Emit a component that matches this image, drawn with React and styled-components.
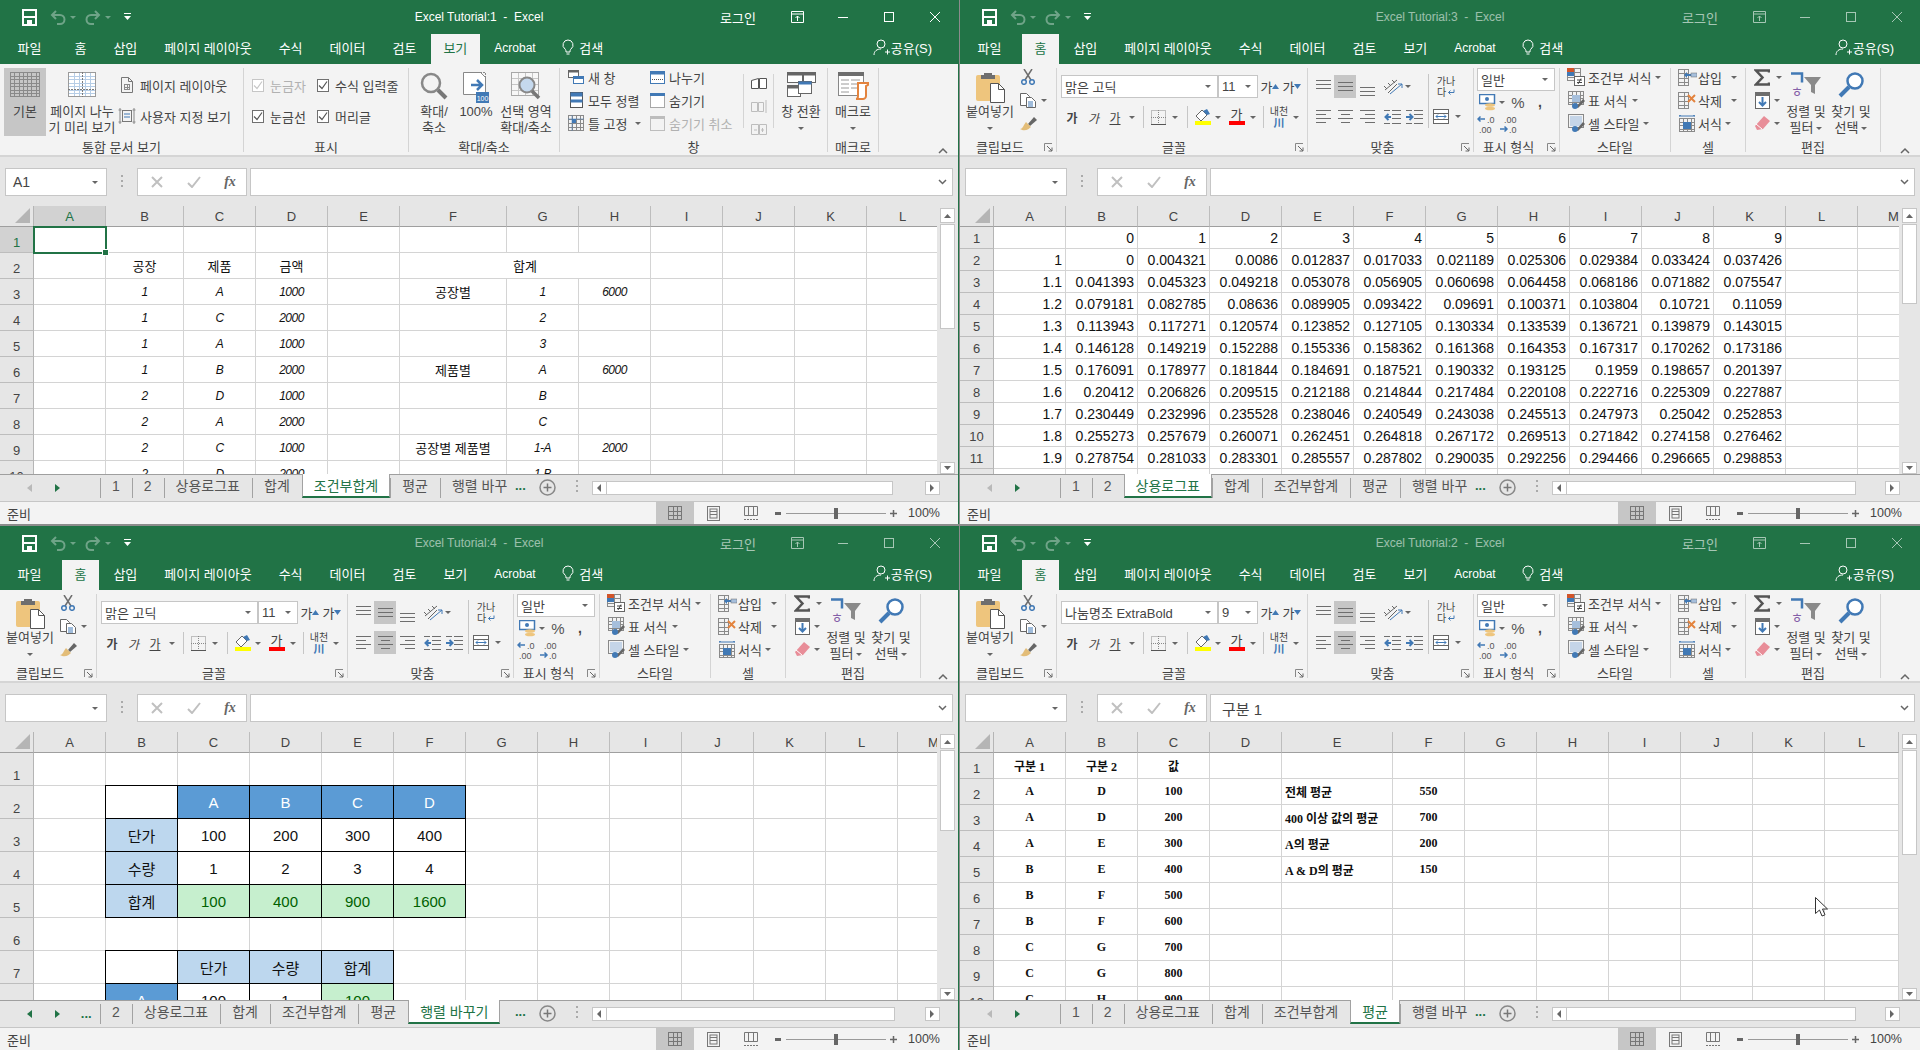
import React, { Fragment } from "react";
import styled, { createGlobalStyle, css } from "styled-components";

const GREEN = "#217346";
const RIBBON = "#f3f3f3";
const CHROME = "#e6e6e6";
const LINE = "#c6c6c6";
const TEXT = "#444444";
const BLUE = "#4179b5";
const GRAY = "#6e6e6e";
const SANS = '"Liberation Sans", "Noto Sans CJK KR", sans-serif';
const SERIF = '"Liberation Serif", "Noto Sans CJK KR", serif';

const GlobalStyles = createGlobalStyle`
  html, body { margin: 0; padding: 0; background: #8c8c8c; overflow: hidden; }
  body { font-family: ${SANS}; font-size: 13px; color: ${TEXT}; }
  svg { display: block; flex: none; }
  * { box-sizing: border-box; }
`;

const Desktop = styled.div`
  display: grid;
  grid-template-columns: 959px 960px;
  grid-template-rows: 524px 524px;
  column-gap: 1px;
  row-gap: 2px;
  width: 1920px;
  height: 1050px;
`;

const Window = styled.section`
  display: flex;
  flex-direction: column;
  overflow: hidden;
  background: ${CHROME};
  border-right: ${p => (p.$left ? `1px solid ${GREEN}` : "0")};
`;

/* title bar */
const TitleRow = styled.header`
  display: grid;
  grid-template-columns: 1fr auto 1fr;
  align-items: center;
  height: 34px;
  background: ${GREEN};
  color: #fff;
`;

const Qat = styled.div`
  display: flex;
  align-items: center;
  padding-left: 22px;
`;

const QatItem = styled.span`
  display: block;
  margin-left: ${p => p.$ml || 0}px;
`;

const QatCaret = styled.i`
  display: block;
  margin-left: ${p => p.$ml || 0}px;
  border: 3px solid transparent;
  border-top: 3px solid ${p => p.$color};
  border-bottom: 0;
`;

const WindowTitle = styled.div`
  font-size: 12px;
  white-space: pre;
  opacity: ${p => (p.$dim ? 0.55 : 1)};
`;

const TitleRight = styled.div`
  display: flex;
  justify-content: flex-end;
  align-items: center;
  opacity: ${p => (p.$dim ? 0.6 : 1)};
`;

const SignIn = styled.span`
  font-size: 13px;
  margin-right: 18px;
`;

const WinBtn = styled.span`
  display: flex;
  align-items: center;
  justify-content: center;
  width: 46px;
  height: 32px;
`;

const TabRow = styled.nav`
  display: flex;
  align-items: stretch;
  height: 30px;
  padding-left: 5px;
  gap: 2px;
  background: ${GREEN};
`;

const RibbonTab = styled.span`
  display: flex;
  align-items: center;
  padding: 0 12.5px 3px;
  color: ${p => (p.$on ? GREEN : "#fff")};
  background: ${p => (p.$on ? RIBBON : "transparent")};
  margin-right: ${p => p.$mr || 0}px;
  font-size: ${p => p.$size || 13}px;
  white-space: nowrap;
`;

const SearchTab = styled.span`
  display: flex;
  align-items: center;
  gap: 5px;
  margin-left: 12px;
  padding-bottom: 3px;
  color: #fff;
`;

const ShareTab = styled.span`
  display: flex;
  align-items: center;
  margin-left: auto;
  padding: 0 26px 3px 0;
  color: #fff;
`;

/* ribbon */
const Ribbon = styled.div`
  display: flex;
  height: 93px;
  padding-top: 4px;
  background: ${RIBBON};
  border-bottom: 2px solid #d5d5d5;
`;

const Group = styled.div`
  display: flex;
  flex-direction: column;
  width: ${p => p.$w}px;
  height: 84px;
  border-right: 1px solid #d4d4d4;
  flex: none;
`;

const Body = styled.div`
  display: flex;
  height: 71px;
  padding-left: ${p => p.$pl || 0}px;
`;

const Foot = styled.div`
  display: flex;
  height: 13px;
  line-height: 18px;
`;

const FootText = styled.span`
  flex: 1;
  text-align: center;
`;

const Launcher = styled.span`
  display: flex;
  justify-content: center;
  align-items: center;
  width: 16px;
  height: 16px;
`;

const Collapse = styled.span`
  align-self: flex-end;
  margin-left: auto;
  margin-right: ${p => p.$mr}px;
  margin-bottom: 1px;
`;

const LargeBtn = styled.div`
  display: flex;
  flex-direction: column;
  align-items: center;
  width: ${p => p.$w}px;
  height: 68px;
  padding-top: 4px;
  background: ${p => (p.$on ? LINE : "transparent")};
  flex: none;
`;

const IconSlot = styled.div`
  display: flex;
  align-items: flex-start;
  justify-content: center;
  height: 32px;
`;

const LargeLabel = styled.div`
  line-height: 16px;
  text-align: center;
  white-space: pre-line;
`;

const Caret = styled.i`
  display: inline-block;
  vertical-align: middle;
  margin-left: ${p => p.$ml || 0}px;
  border: 3px solid transparent;
  border-top: 3.5px solid #666;
  border-bottom: 0;
`;

const CaretLine = styled.div`
  display: flex;
  justify-content: center;
  align-items: center;
  height: 16px;
`;

const TwoRows = styled.div`
  display: grid;
  grid-template-columns: ${p => p.$cols || "auto"};
  grid-auto-rows: 18px;
  row-gap: 13px;
  padding-top: 8px;
  margin-left: ${p => p.$ml || 0}px;
`;

const ThreeRows = styled.div`
  display: grid;
  grid-auto-rows: 18px;
  row-gap: 5px;
  width: ${p => (p.$w ? `${p.$w}px` : "auto")};
  flex: none;
  margin-left: ${p => p.$ml || 0}px;
  border-left: ${p => (p.$rule ? "1px solid #d4d4d4" : "0")};
  border-right: ${p => (p.$rule ? "1px solid #d4d4d4" : "0")};
  height: ${p => (p.$rule ? "54px" : "auto")};
  margin-top: ${p => (p.$rule ? "6px" : "0")};
`;

const Small = styled.div`
  display: flex;
  align-items: center;
  height: 18px;
  white-space: nowrap;
  color: ${p => (p.$off ? "#b1b1b1" : TEXT)};
`;

const SmallIcon = styled.span`
  display: flex;
  justify-content: center;
  align-items: center;
  width: ${p => p.$w || 18}px;
  margin-right: ${p => p.$mr || 0}px;
  flex: none;
`;

const CaretBox = styled.span`
  display: flex;
  justify-content: center;
  align-items: center;
  width: ${p => p.$w || 12}px;
  height: 22px;
  flex: none;
`;

const CheckRow = styled.label`
  display: flex;
  align-items: center;
  gap: 6px;
  height: 18px;
  white-space: nowrap;
  color: ${p => (p.$off ? "#b1b1b1" : TEXT)};
`;

const CheckBox = styled.span`
  display: flex;
  align-items: center;
  justify-content: center;
  width: 12px;
  height: 13px;
  background: #fff;
  border: 1px solid ${p => (p.$off ? "#c6c6c6" : "#707070")};
`;

const FlexCol = styled.div`
  display: flex;
  flex-direction: column;
  gap: ${p => p.$gap || 0}px;
  padding-top: ${p => p.$pt || 0}px;
`;

const ToolRow = styled.div`
  display: flex;
  align-items: center;
  height: ${p => p.$h || 22}px;
`;

const Tool = styled.span`
  display: flex;
  align-items: center;
  justify-content: center;
  width: ${p => p.$w}px;
  height: 23px;
  margin-left: ${p => p.$ml || 0}px;
  background: ${p => (p.$on ? LINE : "transparent")};
  font-size: ${p => p.$size || 12}px;
  font-weight: ${p => (p.$bold ? 700 : 400)};
  font-style: ${p => (p.$italic ? "italic" : "normal")};
  text-decoration: ${p => (p.$under ? "underline" : "none")};
  flex: none;
`;

const Rule = styled.span`
  display: block;
  width: 1px;
  height: 22px;
  background: ${LINE};
  margin: 0 ${p => p.$mr || 0}px 0 ${p => p.$ml || 0}px;
  flex: none;
`;

const TallRule = styled(Rule)`
  height: 54px;
  margin-top: 6px;
`;

const ComboBox = styled.div`
  display: flex;
  align-items: center;
  justify-content: space-between;
  width: ${p => p.$w}px;
  height: ${p => p.$h || 23}px;
  margin-left: ${p => p.$ml || 0}px;
  padding: 0 6px 0 3px;
  background: #fff;
  border: 1px solid ${LINE};
  font-size: 13px;
  white-space: nowrap;
  overflow: hidden;
  flex: none;
`;

const ColorBar = styled.span`
  display: block;
  width: 16px;
  height: 4px;
  background: ${p => p.$color};
`;

const StackTool = styled.span`
  display: flex;
  flex-direction: column;
  align-items: center;
  width: ${p => p.$w}px;
  flex: none;
  margin-left: ${p => p.$ml || 0}px;
  line-height: ${p => p.$lh || 12}px;
  font-size: ${p => p.$size || 12}px;
`;

const WrapLine = styled.span`
  display: flex;
  align-items: center;
  gap: 1px;
`;

const TinyGlyph = styled.span`
  font-size: 11px;
  line-height: 10px;
  font-weight: 700;
  color: ${BLUE};
  text-align: center;
`;

const Percent = styled.span`
  font-size: 15px;
  color: #555;
`;

/* formula bar */
const FormulaRow = styled.div`
  display: flex;
  align-items: flex-start;
  height: 39px;
  padding: 11px 5px 0;
  background: ${CHROME};
`;

const NameBox = styled.div`
  display: flex;
  align-items: center;
  justify-content: space-between;
  width: 102px;
  height: 28px;
  padding: 0 8px 0 7px;
  background: #fff;
  border: 1px solid ${LINE};
  font-size: 14px;
`;

const Grip = styled.span`
  width: 2px;
  height: 14px;
  margin: 7px 14px 0 14px;
  background: repeating-linear-gradient(#aaa 0 2px, transparent 2px 5px);
`;

const FxBox = styled.div`
  display: grid;
  grid-template-columns: 38px 36px 36px;
  justify-items: center;
  align-items: center;
  width: 110px;
  height: 28px;
  background: #fff;
  border: 1px solid ${LINE};
`;

const FxText = styled.span`
  font-family: ${SERIF};
  font-style: italic;
  font-size: 14px;
  font-weight: 700;
  color: #666;
`;

const FormulaInput = styled.div`
  display: flex;
  align-items: center;
  justify-content: space-between;
  flex: 1;
  height: 28px;
  margin-left: 3px;
  padding: 0 5px 0 11px;
  background: #fff;
  border: 1px solid ${LINE};
  font-size: 15px;
`;

/* sheet */
const SheetArea = styled.div`
  position: relative;
  display: flex;
  gap: 3px;
  height: 278px;
  padding: 10px 3px 0 0;
  background: ${CHROME};
`;

const GridFrame = styled.div`
  flex: 1;
  min-width: 0;
  overflow: hidden;
`;

const sheetFonts = {
  plain: css`font-size: 13px;`,
  figures: css`font-size: 14px;`,
  large: css`font-size: 15px;`,
  serif: css`font-family: ${SERIF}; font-size: 12px; font-weight: 700; color: #111;`,
};

const SheetGrid = styled.div`
  display: grid;
  grid-template-columns: 34px ${p => p.$cols.map(c => `${c}px`).join(" ")};
  grid-template-rows: 21px;
  grid-auto-rows: ${p => p.$rowH}px;
  width: max-content;
  background: #fff;
  color: #111;
  ${p => sheetFonts[p.$font]}
`;

const Corner = styled.div`
  display: flex;
  align-items: flex-end;
  justify-content: flex-end;
  padding: 0 3px 3px 0;
  background: ${CHROME};
  border-right: 1px solid #b5b5b5;
  border-bottom: 1px solid #9f9f9f;
`;

const HeadCell = css`
  display: flex;
  justify-content: center;
  font-family: ${SANS};
  font-size: 13px;
  font-weight: 400;
  color: ${p => (p.$on ? GREEN : TEXT)};
  background: ${p => (p.$on ? "#d2d2d2" : CHROME)};
`;

const ColHead = styled.div`
  ${HeadCell}
  align-items: center;
  border-right: 1px solid #bdbdbd;
  border-bottom: 1px solid #9f9f9f;
`;

const RowHead = styled.div`
  ${HeadCell}
  align-items: flex-end;
  padding-bottom: 1px;
  line-height: 16px;
  border-right: 1px solid #b5b5b5;
  border-bottom: 1px solid #bdbdbd;
`;

const cellTones = {
  head: css`background: #5b9bd5; color: #fff;`,
  side: css`background: #bdd7ee;`,
  good: css`background: #c6efce; color: #006100;`,
  blank: css`background: #fff;`,
};

const Cell = styled.div`
  display: flex;
  align-items: center;
  justify-content: ${p => ({ left: "flex-start", right: "flex-end", center: "center" }[p.$align])};
  padding: 0 3px;
  white-space: nowrap;
  overflow: hidden;
  border-right: 1px solid #d4d4d4;
  border-bottom: 1px solid #d4d4d4;
  grid-column: ${p => (p.$span ? `span ${p.$span}` : "auto")};
  ${p => p.$italic && css`font-style: italic; font-size: 12px; letter-spacing: -0.5px;`}
  ${p => p.$tone && cellTones[p.$tone]}
  ${p => p.$box && css`
    position: relative;
    z-index: 1;
    margin: -1px 0 0 -1px;
    border: 1px solid #000;
  `}
`;

const ActiveCell = styled(Cell)`
  position: relative;
  overflow: visible;
  z-index: 2;
  outline: 2px solid ${GREEN};
  outline-offset: -1px;
  &::after {
    content: "";
    position: absolute;
    right: -4px;
    bottom: -4px;
    width: 5px;
    height: 5px;
    background: ${GREEN};
    border: 1px solid #fff;
  }
`;

const VScroll = styled.div`
  display: flex;
  flex-direction: column;
  width: 15px;
  flex: none;
  padding-top: 2px;
`;

const ScrollBtn = styled.div`
  display: flex;
  align-items: center;
  justify-content: center;
  width: 15px;
  height: ${p => p.$h || 15}px;
  background: #fff;
  border: 1px solid ${LINE};
  flex: none;
`;

const VThumb = styled.div`
  height: ${p => p.$h}px;
  margin-top: 1px;
  background: #fff;
  border: 1px solid ${LINE};
  flex: none;
`;

const Spacer = styled.div`
  flex: 1;
`;

const Pointer = styled.span`
  position: absolute;
  left: 855px;
  top: 175px;
`;

/* sheet tabs */
const TabBar = styled.div`
  display: flex;
  align-items: flex-start;
  height: 28px;
  background: ${CHROME};
  border-top: 1px solid #9f9f9f;
  border-bottom: 1px solid ${LINE};
`;

const TabStrip = styled.div`
  display: flex;
  align-items: flex-start;
  width: 515px;
  flex: none;
`;

const TabNav = styled.div`
  display: grid;
  grid-template-columns: repeat(3, 28.5px);
  justify-items: center;
  align-items: center;
  width: 100px;
  height: 20px;
  margin-top: 3px;
  padding-left: 15px;
  flex: none;
`;

const NavArrow = styled.i`
  display: block;
  border-top: 4px solid transparent;
  border-bottom: 4px solid transparent;
  ${p => (p.$dir === "left" ? "border-right" : "border-left")}: 5px solid ${p => (p.$on ? GREEN : "#b9b9b9")};
`;

const More = styled.span`
  font-weight: 700;
  font-size: 13px;
  line-height: 14px;
  color: ${GREEN};
`;

const SheetTab = styled.div`
  height: 20px;
  margin-top: 3px;
  padding: 0 12px 0 11px;
  line-height: 17px;
  font-size: 14px;
  color: #555;
  white-space: nowrap;
  border-left: 1px solid #a2a2a2;
  flex: none;
  ${p => p.$clip && css`width: 68px; padding-right: 0;`}
  ${p => p.$on && css`
    height: 24px;
    margin-top: -1px;
    padding: 0 11px;
    line-height: 25px;
    color: ${GREEN};
    background: #fff;
    border-left: 1px solid #a2a2a2;
    border-right: 1px solid #a2a2a2;
    border-bottom: 2px solid ${GREEN};
  `}
`;

const TabTail = styled.span`
  display: block;
  margin: ${p => p.$t || 0}px 0 0 ${p => p.$ml || 0}px;
  flex: none;
`;

const TabDots = styled.span`
  width: 2px;
  height: 14px;
  margin: 5px 0 0 20px;
  background: repeating-linear-gradient(#aaa 0 2px, transparent 2px 5px);
  flex: none;
`;

const HScroll = styled.div`
  display: flex;
  align-items: stretch;
  width: 348px;
  height: 14px;
  margin: 6px 0 0 14px;
  flex: none;
`;

const HBtn = styled(ScrollBtn)`
  height: 14px;
`;

const HThumb = styled.div`
  width: ${p => p.$w}px;
  background: #fff;
  border: 1px solid ${LINE};
  border-left: 0;
`;

/* status bar */
const StatusBar = styled.footer`
  display: flex;
  align-items: center;
  height: 22px;
  padding: 0 18px 0 7px;
  background: ${RIBBON};
  font-size: 13px;
`;

const ViewBtn = styled.span`
  display: flex;
  align-items: center;
  justify-content: center;
  width: 38px;
  height: 22px;
  background: ${p => (p.$on ? LINE : "transparent")};
  margin-left: ${p => (p.$first ? "auto" : "0")};
`;

const ZoomEnd = styled.span`
  display: flex;
  justify-content: center;
  width: ${p => p.$w}px;
`;

const Slider = styled.div`
  display: flex;
  align-items: center;
  justify-content: center;
  width: 100px;
  height: 11px;
  background: linear-gradient(#9a9a9a, #9a9a9a) center / 100% 1px no-repeat;
`;

const SliderKnob = styled.span`
  display: block;
  width: 4px;
  height: 11px;
  background: #666;
`;

const ZoomText = styled.span`
  width: 40px;
  text-align: right;
  font-size: 12.5px;
`;

/* drawings */
const Svg = ({ w, h, children }) => (
  <svg width={w} height={h} viewBox={`0 0 ${w} ${h}`} fill="none">
    {children}
  </svg>
);

const Mesh = ({ x, y, w, h, cols, rows, color = "#8a8a8a" }) => (
  <g stroke={color} strokeWidth="1">
    <rect x={x + 0.5} y={y + 0.5} width={w - 1} height={h - 1} />
    {Array.from({ length: cols - 1 }, (_, i) => {
      const px = Math.round(x + ((i + 1) * w) / cols) + 0.5;
      return <line key={`c${i}`} x1={px} x2={px} y1={y} y2={y + h} />;
    })}
    {Array.from({ length: rows - 1 }, (_, i) => {
      const py = Math.round(y + ((i + 1) * h) / rows) + 0.5;
      return <line key={`r${i}`} x1={x} x2={x + w} y1={py} y2={py} />;
    })}
  </g>
);

const Bars = ({ w = 15, ys, color = GRAY, spans }) => (
  <Svg w={w} h={23}>
    {ys.map((y, i) => (
      <line key={i} x1={spans ? spans[i][0] : 0} x2={spans ? spans[i][1] : w} y1={y + 0.5} y2={y + 0.5} stroke={color} />
    ))}
  </Svg>
);

const icons = {
  save: (
    <Svg w={15} h={17}>
      <path d="M1 1h13v15H1z" stroke="#fff" strokeWidth="2" />
      <rect x="1" y="7" width="13" height="2" fill="#fff" />
      <rect x="5" y="11" width="5" height="5" fill="#fff" />
    </Svg>
  ),
  undo: (
    <Svg w={16} h={15}>
      <path d="M6 1 2 5l4 4M2 5h8a4.5 4.5 0 0 1 0 9H7" stroke="#6fa488" strokeWidth="2" />
    </Svg>
  ),
  redo: (
    <Svg w={16} h={15}>
      <path d="M10 1l4 4-4 4M14 5H6a4.5 4.5 0 0 0 0 9h3" stroke="#6fa488" strokeWidth="2" />
    </Svg>
  ),
  custom: (
    <Svg w={7} h={8}>
      <path d="M0 .5h7" stroke="#fff" />
      <path d="M0 3h7L3.5 7z" fill="#fff" />
    </Svg>
  ),
  display: (
    <Svg w={13} h={12}>
      <path d="M.5.5h12v11H.5zM.5 3h12M6.5 10V5M4.5 7l2-2 2 2" stroke="#fff" />
    </Svg>
  ),
  min: <Svg w={10} h={10}><path d="M0 5.5h10" stroke="#fff" /></Svg>,
  max: <Svg w={10} h={10}><rect x=".5" y=".5" width="9" height="9" stroke="#fff" /></Svg>,
  close: <Svg w={10} h={10}><path d="M0 0l10 10M10 0 0 10" stroke="#fff" /></Svg>,
  bulb: (
    <Svg w={12} h={17}>
      <path d="M6 1a5 5 0 0 0-3 9c.8.8 1 1.500 1 3h4c0-1.500.2-2.200 1-3a5 5 0 0 0-3-9zM4.500 15h3" stroke="#fff" />
    </Svg>
  ),
  person: (
    <Svg w={18} h={17}>
      <circle cx="8" cy="5" r="4" stroke="#fff" />
      <path d="M1 16c0-4 3-6 7-6M12 13h5M14.500 10.500v5" stroke="#fff" />
    </Svg>
  ),
  chevUp: <Svg w={10} h={7}><path d="M1 6l4-4 4 4" stroke="#666" strokeWidth="1.500" /></Svg>,
  launch: (
    <Svg w={9} h={9}>
      <path d="M.5 8V.5H8" stroke="#888" />
      <path d="M3 3l5 5M8 4.500V8H4.500" stroke="#666" />
    </Svg>
  ),
  normal: <Svg w={30} h={25}><Mesh x={0} y={0} w={30} h={25} cols={7} rows={7} /></Svg>,
  pageBreak: (
    <Svg w={28} h={25}>
      <rect width="28" height="25" fill="#fff" />
      <Mesh x={0} y={0} w={28} h={25} cols={5} rows={7} color="#b6cde6" />
      <rect x=".5" y=".5" width="27" height="24" stroke="#9a9a9a" />
      <path d="M0 17.500h28M14.500 0v25" stroke="#7a7a7a" strokeDasharray="2 1" />
    </Svg>
  ),
  pageLayout: (
    <Svg w={12} h={16}>
      <path d="M.5.500h7l4 4v11H.5zM7.500.500v4h4" stroke="#777" />
      <Mesh x={3} y={7} w={6} h={6} cols={2} rows={2} />
    </Svg>
  ),
  customView: (
    <Svg w={18} h={18}>
      <path d="M.5 3h3M.5 15h3M14.500 3h3M14.500 15h3M2 1v16M16 1v16" stroke="#888" />
      <rect x="4.500" y="3.500" width="9" height="11" stroke="#777" />
      <path d="M6 7h6M6 10h6" stroke={BLUE} />
    </Svg>
  ),
  glass: (
    <Svg w={28} h={28}>
      <circle cx="11" cy="11" r="9" stroke="#888" strokeWidth="2.500" />
      <path d="M18 18l8 8" stroke="#777" strokeWidth="4" />
    </Svg>
  ),
  hundred: (
    <Svg w={26} h={31}>
      <path d="M.5.500h17l5 5v17H.5z" fill="#fff" stroke="#888" />
      <path d="M14 .5h8.500v8" stroke="#888" strokeDasharray="2 1" />
      <path d="M8 13h10M14 8l5 5-5 5" stroke={BLUE} strokeWidth="2.500" />
      <rect x="13" y="20" width="13" height="11" fill={BLUE} />
      <text x="19.500" y="28.500" fontSize="7" fill="#fff" textAnchor="middle" fontFamily={SANS}>100</text>
    </Svg>
  ),
  zoomSel: (
    <Svg w={30} h={28}>
      <Mesh x={0} y={0} w={28} h={24} cols={4} rows={4} color="#a8a8a8" />
      <rect x="1" y="1" width="26" height="22" fill="#fff" fillOpacity=".35" />
      <circle cx="16" cy="13" r="7.500" fill="#c5d9ee" stroke="#888" strokeWidth="2" />
      <path d="M21 19l7 7" stroke="#777" strokeWidth="3.500" />
    </Svg>
  ),
  newWin: (
    <Svg w={16} h={14}>
      <rect x=".5" y=".5" width="10" height="7" fill="#fff" stroke="#666" />
      <rect x=".5" y=".5" width="10" height="2" fill="#666" />
      <rect x="5.500" y="6.500" width="10" height="7" fill="#fff" stroke={BLUE} />
      <rect x="5.500" y="6.500" width="10" height="2.500" fill={BLUE} />
    </Svg>
  ),
  arrange: (
    <Svg w={13} h={16}>
      <rect x=".5" y=".5" width="12" height="15" fill="#fff" stroke="#555" />
      <rect x=".5" y=".5" width="12" height="4" fill={BLUE} />
      <rect x=".5" y="7.500" width="12" height="3" fill={BLUE} />
    </Svg>
  ),
  freeze: (
    <Svg w={16} h={16}>
      <Mesh x={0} y={0} w={16} h={16} cols={4} rows={4} color="#8a8a8a" />
      <rect x="4" y="4" width="4" height="4" fill={BLUE} />
      <path d="M0 4h16M4 0v16" stroke={BLUE} strokeOpacity=".5" />
    </Svg>
  ),
  split: (
    <Svg w={15} h={13}>
      <rect x=".5" y=".5" width="14" height="12" fill="#fff" stroke={BLUE} />
      <rect x=".5" y=".5" width="14" height="3" fill={BLUE} />
      <path d="M2 8.500h11" stroke="#555" strokeDasharray="1 1" />
    </Svg>
  ),
  hide: (
    <Svg w={15} h={15}>
      <rect x=".5" y=".5" width="14" height="14" fill="#fff" stroke="#555" strokeDasharray="1 1" />
      <rect x="0" y="0" width="15" height="3" fill={BLUE} />
    </Svg>
  ),
  unhide: (
    <Svg w={15} h={15}>
      <rect x=".5" y=".5" width="14" height="14" stroke="#bdbdbd" />
      <rect x="0" y="0" width="15" height="3" fill="#bdbdbd" />
    </Svg>
  ),
  sideBySide: (
    <Svg w={16} h={11}>
      <path d="M.5 2.500 7.500.5v10h-7zM8.500.5h7v10h-7z" fill="#fff" stroke="#555" />
    </Svg>
  ),
  syncScroll: (
    <Svg w={16} h={15}>
      <path d="M.5 3.500h6v9h-6zM7.500 3.500h5v9h-5zM15 1v13" stroke="#bdbdbd" />
    </Svg>
  ),
  resetPos: (
    <Svg w={16} h={11}>
      <path d="M.5.5h7v10h-7zM8.500.5h7v10h-7zM3 6h3M10 6h3M11.500 4v4" stroke="#bdbdbd" />
    </Svg>
  ),
  switchWin: (
    <Svg w={29} h={25}>
      <rect x=".5" y=".5" width="15" height="10" fill="#fff" stroke="#666" />
      <rect x=".5" y=".5" width="15" height="3" fill="#666" />
      <rect x="16.500" y=".5" width="12" height="10" fill="#fff" stroke="#666" />
      <rect x="16.500" y=".5" width="12" height="3" fill="#666" />
      <rect x=".5" y="13.500" width="13" height="11" fill="#fff" stroke="#666" />
      <rect x=".5" y="13.500" width="13" height="3" fill="#666" />
      <rect x="11.500" y="9.500" width="13" height="12" fill="#fff" stroke="#666" />
      <rect x="11.500" y="9.500" width="13" height="3" fill={BLUE} />
    </Svg>
  ),
  macro: (
    <Svg w={31} h={28}>
      <rect x=".5" y=".5" width="25" height="23" fill="#fff" stroke="#888" />
      <rect x="0" y="0" width="26" height="4" fill="#6e6e6e" />
      <path d="M3 8h8M13 8h9M3 12h8M13 12h9M3 16h8M13 16h6M3 20h8" stroke="#9a9a9a" />
      <path d="M20 11h10v2l-2 1v10c0 2-2 3-3 3h-7c1 0 2-1 2-3V13z" fill="#fff" stroke="#e3833e" strokeWidth="2" />
    </Svg>
  ),
  paste: (
    <Svg w={29} h={31}>
      <rect x="0" y="3" width="24" height="26" rx="2" fill="#eec57d" />
      <path d="M8 3V1h8v2h3v4H5V3z" fill="#6e6e6e" />
      <path d="M14.500 11.500h8l6 6v13h-14z" fill="#fff" stroke="#555" />
      <path d="M22.500 11.500v6h6" stroke="#555" />
    </Svg>
  ),
  cut: (
    <Svg w={14} h={16}>
      <path d="M3 0l7 11M11 0 4 11" stroke="#6e6e6e" strokeWidth="1.500" />
      <circle cx="3" cy="13" r="2.300" stroke={BLUE} strokeWidth="1.500" />
      <circle cx="11" cy="13" r="2.300" stroke={BLUE} strokeWidth="1.500" />
    </Svg>
  ),
  copy: (
    <Svg w={16} h={15}>
      <path d="M.5.500h6l3 3v9h-9z" fill="#fff" stroke="#666" />
      <path d="M6.500 4.500h5l4 4v6h-9z" fill="#fff" stroke="#666" />
      <path d="M8 9h5M8 11h5M8 13h5" stroke={BLUE} />
    </Svg>
  ),
  brush: (
    <Svg w={17} h={15}>
      <path d="M8 8l6-7 3 3-7 6z" fill="#666" />
      <path d="M0 13c3 0 4-5 6-7l5 5c-2 2-6 5-11 2z" fill="#e3bd78" />
    </Svg>
  ),
  borders: (
    <Svg w={15} h={15}>
      <rect x=".5" y=".5" width="14" height="14" stroke="#888" strokeDasharray="1 1" />
      <path d="M7.500 0v15M0 7.500h15" stroke="#888" strokeDasharray="1 1" />
      <path d="M0 14.500h15" stroke="#555" />
    </Svg>
  ),
  fill: (
    <Svg w={16} h={12}>
      <path d="M7 1 1 7l5 5 6-6z" fill="#fff" stroke="#666" />
      <path d="M8 2l4 4 3-1-3-5z" fill={BLUE} />
    </Svg>
  ),
  orient: (
    <Svg w={22} h={20}>
      <path d="M3 13 15 3M6 16 15 7M2 9l3 3M6 6l3 3M10 3l3 3" stroke="#666" />
      <path d="M8 17l12-10M20 7h-4M20 7v4" stroke={BLUE} />
    </Svg>
  ),
  outdent: (
    <Svg w={17} h={14}>
      <path d="M8 .5h9M8 4.500h9M8 8.500h9M8 13.500h9M0 13.500h6M0 .5h6" stroke={GRAY} />
      <path d="M7 7H2M4.500 4 1.500 7l3 3" stroke={BLUE} strokeWidth="2" />
    </Svg>
  ),
  indent: (
    <Svg w={17} h={14}>
      <path d="M8 .5h9M8 4.500h9M8 8.500h9M8 13.500h9M0 13.500h6M0 .5h6" stroke={GRAY} />
      <path d="M0 7h6M3.500 4l3 3-3 3" stroke={BLUE} strokeWidth="2" />
    </Svg>
  ),
  merge: (
    <Svg w={16} h={15}>
      <rect x=".5" y=".5" width="15" height="14" fill="#fff" stroke="#666" />
      <path d="M0 4.500h16M0 10.500h16" stroke="#666" />
      <path d="M3 7.500h10M5 5.500l-2 2 2 2M11 5.500l2 2-2 2" stroke={BLUE} />
    </Svg>
  ),
  wrapArrow: <Svg w={8} h={6}><path d="M7 .5v3H1.500M3.500 1.500l-2 2 2 2" stroke={BLUE} /></Svg>,
  money: (
    <Svg w={17} h={17}>
      <rect x=".5" y=".5" width="15" height="9" fill="#fff" stroke={BLUE} strokeWidth="1.500" />
      <circle cx="8" cy="5" r="2" fill={BLUE} />
      <ellipse cx="11" cy="11" rx="5" ry="1.800" fill="#eec57d" />
      <ellipse cx="11" cy="14.500" rx="5" ry="1.800" fill="#eec57d" />
    </Svg>
  ),
  cond: (
    <Svg w={18} h={18}>
      <Mesh x={0} y={0} w={14} h={13} cols={2} rows={3} />
      <rect x="0" y="0" width="7" height="4" fill="#d2552a" />
      <rect x="0" y="4" width="7" height="4" fill={BLUE} />
      <rect x="7.500" y="8.500" width="10" height="9" fill="#fff" stroke="#666" />
      <path d="M10 12h5M10 14.500h5M14 10.500l-3 5.500" stroke="#444" />
    </Svg>
  ),
  table: (
    <Svg w={17} h={18}>
      <Mesh x={0} y={0} w={16} h={14} cols={4} rows={4} />
      <rect x="4" y="4" width="8" height="7" fill="#a6bfdc" />
      <path d="M8 16l7-8 2 2-7 7z" fill="#666" />
      <circle cx="7" cy="15" r="3" fill={BLUE} />
    </Svg>
  ),
  cellStyle: (
    <Svg w={17} h={18}>
      <rect x=".5" y=".5" width="15" height="13" stroke="#888" />
      <rect x="2" y="2" width="12" height="10" fill="#c5d5e8" />
      <path d="M8 16l7-8 2 2-7 7z" fill="#666" />
      <circle cx="7" cy="15" r="3" fill={BLUE} />
    </Svg>
  ),
  insert: (
    <Svg w={19} h={17}>
      <Mesh x={0} y={0} w={11} h={17} cols={2} rows={4} />
      <path d="M9 6h5" stroke={BLUE} strokeWidth="2" />
      <path d="M6 6l3-3v6z" fill={BLUE} />
      <rect x="13" y="4" width="6" height="4" fill="#a6bfdc" stroke={GRAY} strokeWidth=".5" />
    </Svg>
  ),
  remove: (
    <Svg w={19} h={17}>
      <Mesh x={0} y={0} w={11} h={17} cols={2} rows={4} />
      <path d="M10 3l7 7M17 3l-7 7" stroke="#e3833e" strokeWidth="2" />
    </Svg>
  ),
  format: (
    <Svg w={16} h={17}>
      <path d="M0 1h16M0 1l2-1M16 1l-2-1" stroke={BLUE} />
      <Mesh x={0} y={3} w={16} h={14} cols={4} rows={4} />
      <rect x="4" y="7" width="8" height="7" fill={BLUE} />
    </Svg>
  ),
  sigma: (
    <Svg w={16} h={17}>
      <path d="M15 3.500V1.500H2L8.500 8.500 2 15.500h13v-2" stroke="#555" strokeWidth="2.500" />
    </Svg>
  ),
  fillDown: (
    <Svg w={15} h={17}>
      <rect x=".5" y=".5" width="14" height="16" fill="#fff" stroke="#666" />
      <rect x="0" y="0" width="15" height="4" fill="#6e6e6e" />
      <path d="M7.500 5v8M4 10l3.500 3.500L11 10" stroke={BLUE} strokeWidth="2" />
    </Svg>
  ),
  eraser: (
    <Svg w={15} h={14}>
      <path d="M9 0l6 5-7 8-6 1-2-4z" fill="#e88d98" />
      <path d="M1 8l6 5" stroke="#fff" />
    </Svg>
  ),
  sort: (
    <Svg w={30} h={25}>
      <path d="M0 1.500h11v9" stroke={BLUE} strokeWidth="2.500" />
      <text x="6" y="24" fontSize="13" fill="#8460a8" textAnchor="middle" fontFamily={SANS}>ㅎ</text>
      <path d="M13 5h17l-6 8v9l-4-2v-7z" fill="#8a8a8a" />
    </Svg>
  ),
  find: (
    <Svg w={28} h={26}>
      <circle cx="18" cy="9" r="7.500" fill="#fff" stroke={BLUE} strokeWidth="2.500" />
      <path d="M12 15 3 24" stroke={BLUE} strokeWidth="4" />
    </Svg>
  ),
  stNormal: <Svg w={14} h={14}><Mesh x={0} y={0} w={14} h={14} cols={3} rows={3} color="#777" /></Svg>,
  stLayout: (
    <Svg w={13} h={15}>
      <rect x=".5" y=".5" width="12" height="14" stroke="#777" />
      <rect x="3" y="3" width="7" height="9" stroke="#777" />
      <path d="M3 5.500h7M3 8.500h7" stroke="#777" />
    </Svg>
  ),
  stBreak: (
    <Svg w={14} h={15}>
      <path d="M.5.500h13v9H.5zM4.500.500v9M9.500.500v9" stroke="#777" />
      <path d="M0 13.500h14" stroke="#777" strokeDasharray="2 1" />
    </Svg>
  ),
  minus: <Svg w={6} h={3}><rect width="6" height="3" fill="#666" /></Svg>,
  plus: <Svg w={7} h={7}><path d="M0 3.500h7M3.500 0v7" stroke="#666" strokeWidth="1.500" /></Svg>,
  addSheet: (
    <Svg w={17} h={17}>
      <circle cx="8.500" cy="8.500" r="7.500" stroke="#888" strokeWidth="1.500" />
      <path d="M4.500 8.500h8M8.500 4.500v8" stroke="#777" strokeWidth="1.500" />
    </Svg>
  ),
  cross: <Svg w={12} h={12}><path d="M1 1l10 10M11 1 1 11" stroke="#c0c0c0" strokeWidth="2" /></Svg>,
  tick: <Svg w={14} h={12}><path d="M1 7l4 4 8-10" stroke="#c0c0c0" strokeWidth="2" /></Svg>,
  chevDown: <Svg w={9} h={6}><path d="M1 1l3.500 3.500L8 1" stroke="#666" strokeWidth="1.500" /></Svg>,
  corner: <Svg w={15} h={15}><path d="M15 0v15H0z" fill="#b5b5b5" /></Svg>,
  arrowUp: <Svg w={7} h={4}><path d="M3.500 0 7 4H0z" fill="#666" /></Svg>,
  arrowDown: <Svg w={7} h={4}><path d="M0 0h7L3.500 4z" fill="#666" /></Svg>,
  arrowLeft: <Svg w={4} h={8}><path d="M4 0v8L0 4z" fill="#666" /></Svg>,
  arrowRight: <Svg w={4} h={8}><path d="M0 0v8l4-4z" fill="#666" /></Svg>,
  pointer: (
    <Svg w={13} h={20}>
      <path d="M.5.500v16l4-3.500 2.500 6 3-1.200-2.500-5.800h5z" fill="#fff" stroke="#333" />
    </Svg>
  ),
  tickMark: <Svg w={10} h={9}><path d="M1 4.500l3 3 5-7" stroke="#555" strokeWidth="1.200" /></Svg>,
  tickMarkOff: <Svg w={10} h={9}><path d="M1 4.500l3 3 5-7" stroke="#c6c6c6" strokeWidth="1.200" /></Svg>,
  growMark: <Svg w={7} h={5}><path d="M3.500 0 7 5H0z" fill={BLUE} /></Svg>,
  shrinkMark: <Svg w={7} h={5}><path d="M0 0h7L3.500 5z" fill={BLUE} /></Svg>,
  decMore: (
    <Svg w={22} h={20}>
      <path d="M1 4h7M3.500 1.500 1 4l2.500 2.500" stroke={BLUE} strokeWidth="1.500" />
      <text x="10" y="8" fontSize="9" fill="#555" fontFamily={SANS}>.0</text>
      <text x="2" y="18" fontSize="9" fill="#555" fontFamily={SANS}>.00</text>
    </Svg>
  ),
  decLess: (
    <Svg w={22} h={20}>
      <text x="5" y="8" fontSize="9" fill="#555" fontFamily={SANS}>.00</text>
      <path d="M1 14h7M5.500 11.500 8 14l-2.500 2.500" stroke={BLUE} strokeWidth="1.500" />
      <text x="10" y="18" fontSize="9" fill="#555" fontFamily={SANS}>.0</text>
    </Svg>
  ),
};

const Check = ({ label, off }) => (
  <CheckRow $off={off}>
    <CheckBox $off={off}>{off ? icons.tickMarkOff : icons.tickMark}</CheckBox>
    {label}
  </CheckRow>
);

const GroupFoot = ({ label, launcher }) => (
  <Foot>
    <FootText>{label}</FootText>
    {launcher && <Launcher>{icons.launch}</Launcher>}
  </Foot>
);

const ViewRibbon = () => (
  <Ribbon>
    <Group $w={244}>
      <Body $pl={4}>
        <LargeBtn $w={42} $on>
          <IconSlot>{icons.normal}</IconSlot>
          <LargeLabel>기본</LargeLabel>
        </LargeBtn>
        <LargeBtn $w={72}>
          <IconSlot>{icons.pageBreak}</IconSlot>
          <LargeLabel>{"페이지 나누\n기 미리 보기"}</LargeLabel>
        </LargeBtn>
        <TwoRows>
          <Small>
            <SmallIcon $w={18} $mr={4}>{icons.pageLayout}</SmallIcon>
            페이지 레이아웃
          </Small>
          <Small>
            <SmallIcon $w={18} $mr={4}>{icons.customView}</SmallIcon>
            사용자 지정 보기
          </Small>
        </TwoRows>
      </Body>
      <GroupFoot label="통합 문서 보기" />
    </Group>
    <Group $w={165}>
      <Body $pl={8}>
        <TwoRows $cols="65px auto">
          <Check label="눈금자" off />
          <Check label="수식 입력줄" />
          <Check label="눈금선" />
          <Check label="머리글" />
        </TwoRows>
      </Body>
      <GroupFoot label="표시" />
    </Group>
    <Group $w={151}>
      <Body>
        <LargeBtn $w={50}>
          <IconSlot>{icons.glass}</IconSlot>
          <LargeLabel>{"확대/\n축소"}</LargeLabel>
        </LargeBtn>
        <LargeBtn $w={34}>
          <IconSlot>{icons.hundred}</IconSlot>
          <LargeLabel>100%</LargeLabel>
        </LargeBtn>
        <LargeBtn $w={66}>
          <IconSlot>{icons.zoomSel}</IconSlot>
          <LargeLabel>{"선택 영역\n확대/축소"}</LargeLabel>
        </LargeBtn>
      </Body>
      <GroupFoot label="확대/축소" />
    </Group>
    <Group $w={268}>
      <Body $pl={7}>
        <ThreeRows $w={81}>
          <Small><SmallIcon $mr={3}>{icons.newWin}</SmallIcon>새 창</Small>
          <Small><SmallIcon $mr={3}>{icons.arrange}</SmallIcon>모두 정렬</Small>
          <Small>
            <SmallIcon $mr={3}>{icons.freeze}</SmallIcon>
            틀 고정<Caret $ml={7} />
          </Small>
        </ThreeRows>
        <ThreeRows $w={95}>
          <Small><SmallIcon $mr={3}>{icons.split}</SmallIcon>나누기</Small>
          <Small><SmallIcon $mr={3}>{icons.hide}</SmallIcon>숨기기</Small>
          <Small $off><SmallIcon $mr={3}>{icons.unhide}</SmallIcon>숨기기 취소</Small>
        </ThreeRows>
        <ThreeRows $w={31} $rule>
          <SmallIcon $w={29}>{icons.sideBySide}</SmallIcon>
          <SmallIcon $w={29}>{icons.syncScroll}</SmallIcon>
          <SmallIcon $w={29}>{icons.resetPos}</SmallIcon>
        </ThreeRows>
        <LargeBtn $w={54}>
          <IconSlot>{icons.switchWin}</IconSlot>
          <LargeLabel>창 전환</LargeLabel>
          <CaretLine><Caret /></CaretLine>
        </LargeBtn>
      </Body>
      <GroupFoot label="창" />
    </Group>
    <Group $w={51}>
      <Body>
        <LargeBtn $w={50}>
          <IconSlot>{icons.macro}</IconSlot>
          <LargeLabel>매크로</LargeLabel>
          <CaretLine><Caret /></CaretLine>
        </LargeBtn>
      </Body>
      <GroupFoot label="매크로" />
    </Group>
    <Collapse $mr={10}>{icons.chevUp}</Collapse>
  </Ribbon>
);

const HomeRibbon = ({ font, size, center }) => (
  <Ribbon>
    <Group $w={97}>
      <Body $pl={4}>
        <LargeBtn $w={52}>
          <IconSlot>{icons.paste}</IconSlot>
          <LargeLabel>붙여넣기</LargeLabel>
          <CaretLine><Caret /></CaretLine>
        </LargeBtn>
        <ThreeRows>
          <Small><SmallIcon $w={24}>{icons.cut}</SmallIcon></Small>
          <Small>
            <SmallIcon $w={24}>{icons.copy}</SmallIcon>
            <Caret $ml={1} />
          </Small>
          <Small><SmallIcon $w={24}>{icons.brush}</SmallIcon></Small>
        </ThreeRows>
      </Body>
      <GroupFoot label="클립보드" launcher />
    </Group>
    <Group $w={251}>
      <Body $pl={4}>
        <FlexCol $pt={7} $gap={8}>
          <ToolRow $h={23}>
            <ComboBox $w={157}>{font}<Caret /></ComboBox>
            <ComboBox $w={40}>{size}<Caret /></ComboBox>
            <Tool $w={24} $size={13}>가<TabTail>{icons.growMark}</TabTail></Tool>
            <Tool $w={20} $size={13}>가<TabTail>{icons.shrinkMark}</TabTail></Tool>
          </ToolRow>
          <ToolRow>
            <Tool $w={22} $bold>가</Tool>
            <Tool $w={21} $italic>가</Tool>
            <Tool $w={22} $under>가</Tool>
            <CaretBox><Caret /></CaretBox>
            <Rule $ml={5} $mr={4} />
            <Tool $w={20}>{icons.borders}</Tool>
            <CaretBox $w={14}><Caret /></CaretBox>
            <Rule $ml={5} $mr={5} />
            <StackTool $w={19}>{icons.fill}<ColorBar $color="#ffff00" /></StackTool>
            <CaretBox><Caret /></CaretBox>
            <StackTool $w={21} $ml={2} $size={13}>가<ColorBar $color="#ff0000" /></StackTool>
            <CaretBox><Caret /></CaretBox>
            <Rule $ml={4} $mr={5} />
            <StackTool $w={20} $size={10}>내천<TinyGlyph>川</TinyGlyph></StackTool>
            <CaretBox $w={14}><Caret /></CaretBox>
          </ToolRow>
        </FlexCol>
      </Body>
      <GroupFoot label="글꼴" launcher />
    </Group>
    <Group $w={166}>
      <Body $pl={4}>
        <FlexCol $pt={7} $gap={7}>
          <ToolRow $h={23}>
            <Tool $w={22}><Bars ys={[5, 9, 13]} /></Tool>
            <Tool $w={22} $on><Bars ys={[7, 11, 15]} /></Tool>
            <Tool $w={22}><Bars ys={[12, 16, 20]} /></Tool>
            <Tool $w={22} $ml={4}>{icons.orient}</Tool>
            <CaretBox $w={8}><Caret /></CaretBox>
          </ToolRow>
          <ToolRow $h={23}>
            <Tool $w={22}><Bars ys={[5, 9, 13, 17]} spans={[[0, 15], [0, 10], [0, 15], [0, 10]]} /></Tool>
            <Tool $w={22} $on={center}><Bars ys={[5, 9, 13, 17]} spans={[[0, 15], [3, 12], [0, 15], [3, 12]]} /></Tool>
            <Tool $w={22}><Bars ys={[5, 9, 13, 17]} spans={[[0, 15], [5, 15], [0, 15], [5, 15]]} /></Tool>
            <Tool $w={22} $ml={3}>{icons.outdent}</Tool>
            <Tool $w={22}>{icons.indent}</Tool>
          </ToolRow>
        </FlexCol>
        <TallRule $ml={3} />
        <FlexCol $pt={7} $gap={7}>
          <ToolRow $h={23}>
            <StackTool $w={34} $size={10} $lh={11}>
              가나
              <WrapLine>다{icons.wrapArrow}</WrapLine>
            </StackTool>
          </ToolRow>
          <ToolRow $h={23}>
            <Tool $w={24}>{icons.merge}</Tool>
            <CaretBox $w={10}><Caret /></CaretBox>
          </ToolRow>
        </FlexCol>
      </Body>
      <GroupFoot label="맞춤" launcher />
    </Group>
    <Group $w={86}>
      <Body $pl={3}>
        <ThreeRows>
          <ComboBox $w={78} $h={23}>일반<Caret /></ComboBox>
          <ToolRow>
            <Tool $w={20}>{icons.money}</Tool>
            <CaretBox $w={10}><Caret /></CaretBox>
            <Tool $w={22}><Percent>%</Percent></Tool>
            <Tool $w={22} $bold $size={14}>,</Tool>
          </ToolRow>
          <ToolRow>
            <Tool $w={22}>{icons.decMore}</Tool>
            <Tool $w={22}>{icons.decLess}</Tool>
          </ToolRow>
        </ThreeRows>
      </Body>
      <GroupFoot label="표시 형식" launcher />
    </Group>
    <Group $w={111}>
      <Body $pl={7}>
        <ThreeRows>
          <Small><SmallIcon $mr={3}>{icons.cond}</SmallIcon>조건부 서식<Caret $ml={4} /></Small>
          <Small><SmallIcon $mr={3}>{icons.table}</SmallIcon>표 서식<Caret $ml={4} /></Small>
          <Small><SmallIcon $mr={3}>{icons.cellStyle}</SmallIcon>셀 스타일<Caret $ml={4} /></Small>
        </ThreeRows>
      </Body>
      <GroupFoot label="스타일" />
    </Group>
    <Group $w={75}>
      <Body $pl={6}>
        <ThreeRows>
          <Small><SmallIcon $w={20} $mr={1}>{icons.insert}</SmallIcon>삽입<Caret $ml={9} /></Small>
          <Small><SmallIcon $w={20} $mr={1}>{icons.remove}</SmallIcon>삭제<Caret $ml={9} /></Small>
          <Small><SmallIcon $w={20} $mr={1}>{icons.format}</SmallIcon>서식<Caret $ml={3} /></Small>
        </ThreeRows>
      </Body>
      <GroupFoot label="셀" />
    </Group>
    <Group $w={135}>
      <Body $pl={7}>
        <ThreeRows $w={30}>
          <Small><SmallIcon $w={18} $mr={5}>{icons.sigma}</SmallIcon><Caret /></Small>
          <Small><SmallIcon $w={18} $mr={3}>{icons.fillDown}</SmallIcon><Caret /></Small>
          <Small><SmallIcon $w={18} $mr={3}>{icons.eraser}</SmallIcon><Caret /></Small>
        </ThreeRows>
        <LargeBtn $w={46}>
          <IconSlot>{icons.sort}</IconSlot>
          <LargeLabel>{"정렬 및\n필터"}<Caret $ml={3} /></LargeLabel>
        </LargeBtn>
        <LargeBtn $w={44}>
          <IconSlot>{icons.find}</IconSlot>
          <LargeLabel>{"찾기 및\n선택"}<Caret $ml={3} /></LargeLabel>
        </LargeBtn>
      </Body>
      <GroupFoot label="편집" />
    </Group>
    <Collapse $mr={10}>{icons.chevUp}</Collapse>
  </Ribbon>
);

const Sheet = ({ data }) => (
  <GridFrame>
    <SheetGrid $cols={data.cols} $rowH={data.rowH} $font={data.font}>
      <Corner>{icons.corner}</Corner>
      {data.cols.map((_, i) => (
        <ColHead key={i} $on={data.active && i === 0}>{"ABCDEFGHIJKLM"[i]}</ColHead>
      ))}
      {data.rows.map((row, r) => {
        const cells = [];
        let filled = 0;
        row.forEach(c => {
          cells.push(c);
          filled += c && c.span ? c.span : 1;
        });
        while (filled < data.cols.length) {
          cells.push(null);
          filled++;
        }
        return (
          <Fragment key={r}>
            <RowHead $on={data.active && r === 0}>{r + 1}</RowHead>
            {cells.map((c, i) => {
              const cell = typeof c === "string" ? { t: c } : c || {};
              const Comp = cell.active ? ActiveCell : Cell;
              return (
                <Comp
                  key={i}
                  $align={cell.a || data.align}
                  $span={cell.span}
                  $italic={cell.italic}
                  $tone={cell.tone}
                  $box={cell.box}
                >
                  {cell.t}
                </Comp>
              );
            })}
          </Fragment>
        );
      })}
    </SheetGrid>
  </GridFrame>
);

const ExcelWindow = ({ n, left, dim, tab, ribbon, nameBox, formula, sheet, thumb, tabs, navLeft, navMore, hThumb, pointer }) => {
  const ribbonTabs = ["홈", "삽입", "페이지 레이아웃", "수식", "데이터", "검토", "보기"];
  return (
    <Window $left={left}>
      <TitleRow>
        <Qat>
          <QatItem>{icons.save}</QatItem>
          <QatItem $ml={13}>{icons.undo}</QatItem>
          <QatCaret $ml={4} $color="#6fa488" />
          <QatItem $ml={9}>{icons.redo}</QatItem>
          <QatCaret $ml={4} $color="#6fa488" />
          <QatItem $ml={13}>{icons.custom}</QatItem>
        </Qat>
        <WindowTitle $dim={dim}>{`Excel Tutorial:${n}  -  Excel`}</WindowTitle>
        <TitleRight $dim={dim}>
          <SignIn>로그인</SignIn>
          <WinBtn>{icons.display}</WinBtn>
          <WinBtn>{icons.min}</WinBtn>
          <WinBtn>{icons.max}</WinBtn>
          <WinBtn>{icons.close}</WinBtn>
        </TitleRight>
      </TitleRow>
      <TabRow>
        <RibbonTab $mr={6}>파일</RibbonTab>
        {ribbonTabs.map(t => (
          <RibbonTab key={t} $on={t === tab}>{t}</RibbonTab>
        ))}
        <RibbonTab $size={12}>Acrobat</RibbonTab>
        <SearchTab>{icons.bulb}검색</SearchTab>
        <ShareTab>{icons.person}공유(S)</ShareTab>
      </TabRow>
      {ribbon}
      <FormulaRow>
        <NameBox><span>{nameBox}</span><Caret /></NameBox>
        <Grip />
        <FxBox>
          {icons.cross}
          {icons.tick}
          <FxText>fx</FxText>
        </FxBox>
        <FormulaInput><span>{formula}</span>{icons.chevDown}</FormulaInput>
      </FormulaRow>
      <SheetArea>
        <Sheet data={sheet} />
        <VScroll>
          <ScrollBtn>{icons.arrowUp}</ScrollBtn>
          <VThumb $h={thumb} />
          <Spacer />
          <ScrollBtn $h={12}>{icons.arrowDown}</ScrollBtn>
        </VScroll>
        {pointer && <Pointer>{icons.pointer}</Pointer>}
      </SheetArea>
      <TabBar>
        <TabStrip>
          <TabNav>
            <NavArrow $dir="left" $on={navLeft} />
            <NavArrow $on />
            {navMore && <More>...</More>}
          </TabNav>
          {tabs.map(t => (
            <SheetTab key={t.label} $on={t.on} $clip={t.clip}>{t.label}</SheetTab>
          ))}
        </TabStrip>
        <TabTail $t={3} $ml={0}><More>...</More></TabTail>
        <TabTail $t={4} $ml={13}>{icons.addSheet}</TabTail>
        <TabDots />
        <HScroll>
          <HBtn>{icons.arrowLeft}</HBtn>
          <HThumb $w={hThumb} />
          <Spacer />
          <HBtn>{icons.arrowRight}</HBtn>
        </HScroll>
      </TabBar>
      <StatusBar>
        준비
        <ViewBtn $on $first>{icons.stNormal}</ViewBtn>
        <ViewBtn>{icons.stLayout}</ViewBtn>
        <ViewBtn>{icons.stBreak}</ViewBtn>
        <ZoomEnd $w={16}>{icons.minus}</ZoomEnd>
        <Slider><SliderKnob /></Slider>
        <ZoomEnd $w={14}>{icons.plus}</ZoomEnd>
        <ZoomText>100%</ZoomText>
      </StatusBar>
    </Window>
  );
};

const it = t => ({ t, italic: true });

const subtotalSheet = {
  cols: [72, 78, 72, 72, 72, 107, 72, 72, 72, 72, 72, 72],
  rowH: 26,
  font: "plain",
  align: "center",
  active: true,
  rows: [
    [{ active: true }],
    [null, "공장", "제품", "금액", null, { t: "합계", span: 3 }],
    [null, it("1"), it("A"), it("1000"), null, "공장별", it("1"), it("6000")],
    [null, it("1"), it("C"), it("2000"), null, null, it("2")],
    [null, it("1"), it("A"), it("1000"), null, null, it("3")],
    [null, it("1"), it("B"), it("2000"), null, "제품별", it("A"), it("6000")],
    [null, it("2"), it("D"), it("1000"), null, null, it("B")],
    [null, it("2"), it("A"), it("2000"), null, null, it("C")],
    [null, it("2"), it("C"), it("1000"), null, "공장별 제품별", it("1-A"), it("2000")],
    [null, it("2"), it("D"), it("2000"), null, null, it("1-B")],
  ],
};

const logTable = [
  ["", "0", "1", "2", "3", "4", "5", "6", "7", "8", "9"],
  ["1", "0", "0.004321", "0.0086", "0.012837", "0.017033", "0.021189", "0.025306", "0.029384", "0.033424", "0.037426"],
  ["1.1", "0.041393", "0.045323", "0.049218", "0.053078", "0.056905", "0.060698", "0.064458", "0.068186", "0.071882", "0.075547"],
  ["1.2", "0.079181", "0.082785", "0.08636", "0.089905", "0.093422", "0.09691", "0.100371", "0.103804", "0.10721", "0.11059"],
  ["1.3", "0.113943", "0.117271", "0.120574", "0.123852", "0.127105", "0.130334", "0.133539", "0.136721", "0.139879", "0.143015"],
  ["1.4", "0.146128", "0.149219", "0.152288", "0.155336", "0.158362", "0.161368", "0.164353", "0.167317", "0.170262", "0.173186"],
  ["1.5", "0.176091", "0.178977", "0.181844", "0.184691", "0.187521", "0.190332", "0.193125", "0.1959", "0.198657", "0.201397"],
  ["1.6", "0.20412", "0.206826", "0.209515", "0.212188", "0.214844", "0.217484", "0.220108", "0.222716", "0.225309", "0.227887"],
  ["1.7", "0.230449", "0.232996", "0.235528", "0.238046", "0.240549", "0.243038", "0.245513", "0.247973", "0.25042", "0.252853"],
  ["1.8", "0.255273", "0.257679", "0.260071", "0.262451", "0.264818", "0.267172", "0.269513", "0.271842", "0.274158", "0.276462"],
  ["1.9", "0.278754", "0.281033", "0.283301", "0.285557", "0.287802", "0.290035", "0.292256", "0.294466", "0.296665", "0.298853"],
  [],
];

const logSheet = {
  cols: Array(13).fill(72),
  rowH: 22,
  font: "figures",
  align: "right",
  rows: logTable,
};

const boxed = (t, tone) => ({ t, tone, box: true });

const matrixSheet = {
  cols: Array(13).fill(72),
  rowH: 33,
  font: "large",
  align: "center",
  rows: [
    [],
    [null, boxed("", "blank"), boxed("A", "head"), boxed("B", "head"), boxed("C", "head"), boxed("D", "head")],
    [null, boxed("단가", "side"), boxed("100"), boxed("200"), boxed("300"), boxed("400")],
    [null, boxed("수량", "side"), boxed("1"), boxed("2"), boxed("3"), boxed("4")],
    [null, boxed("합계", "side"), boxed("100", "good"), boxed("400", "good"), boxed("900", "good"), boxed("1600", "good")],
    [],
    [null, boxed("", "blank"), boxed("단가", "side"), boxed("수량", "side"), boxed("합계", "side")],
    [null, boxed("A", "head"), boxed("100"), boxed("1"), boxed("100", "good")],
  ],
};

const left = t => ({ t, a: "left" });

const averageSheet = {
  cols: [72, 72, 72, 72, 111, 72, 72, 72, 72, 72, 72, 74],
  rowH: 26,
  font: "serif",
  align: "center",
  rows: [
    ["구분 1", "구분 2", "값"],
    ["A", "D", "100", null, left("전체 평균"), "550"],
    ["A", "D", "200", null, left("400 이상 값의 평균"), "700"],
    ["A", "E", "300", null, left("A의 평균"), "200"],
    ["B", "E", "400", null, left("A & D의 평균"), "150"],
    ["B", "F", "500"],
    ["B", "F", "600"],
    ["C", "G", "700"],
    ["C", "G", "800"],
    ["C", "H", "900"],
  ],
};

// the last tab only shows in full when it is the selected one
const sheetTabs = (active, names) =>
  names.map(name => {
    const clip = name === "행렬 바꾸기" && name !== active;
    return { label: clip ? "행렬 바꾸" : name, on: name === active, clip };
  });

const allTabs = ["1", "2", "상용로그표", "합계", "조건부합계", "평균", "행렬 바꾸기"];

const App = () => (
  <>
    <GlobalStyles />
    <Desktop>
      <ExcelWindow
        n={1}
        left
        tab="보기"
        ribbon={<ViewRibbon />}
        nameBox="A1"
        sheet={subtotalSheet}
        thumb={105}
        tabs={sheetTabs("조건부합계", allTabs)}
        hThumb={286}
      />
      <ExcelWindow
        n={3}
        dim
        tab="홈"
        ribbon={<HomeRibbon font="맑은 고딕" size="11" />}
        sheet={logSheet}
        thumb={80}
        tabs={sheetTabs("상용로그표", allTabs)}
        hThumb={289}
      />
      <ExcelWindow
        n={4}
        left
        dim
        tab="홈"
        ribbon={<HomeRibbon font="맑은 고딕" size="11" center />}
        sheet={matrixSheet}
        thumb={81}
        tabs={sheetTabs("행렬 바꾸기", allTabs.slice(1))}
        navLeft
        navMore
        hThumb={288}
      />
      <ExcelWindow
        n={2}
        dim
        tab="홈"
        ribbon={<HomeRibbon font="나눔명조 ExtraBold" size="9" center />}
        formula="구분 1"
        sheet={averageSheet}
        thumb={105}
        tabs={sheetTabs("평균", allTabs)}
        hThumb={289}
        pointer
      />
    </Desktop>
  </>
);

export default App;
